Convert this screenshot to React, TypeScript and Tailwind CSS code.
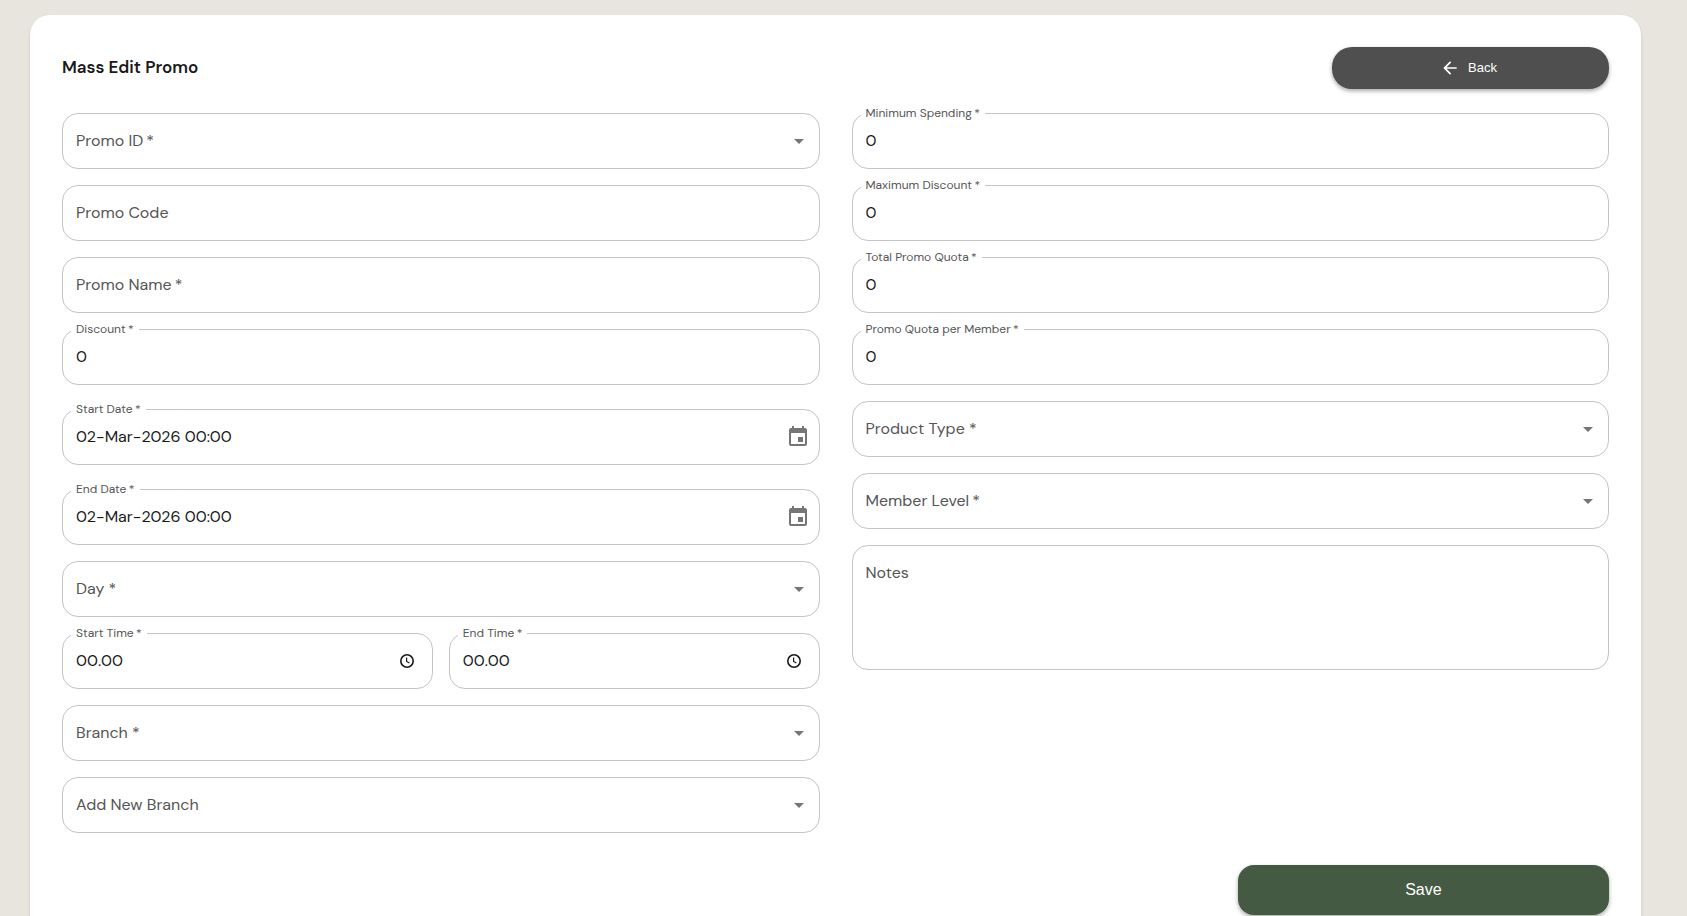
import { useState, type ReactNode } from "react"
import { MdArrowBack, MdArrowDropDown, MdEvent } from "react-icons/md"

const control =
  "block w-full h-14 rounded-2xl border border-[#c4c4c4] bg-transparent px-[13px] pb-[2px] text-base text-[#1a1a1a] outline-none focus:border-[#455a42]"

type FieldProps = {
  id: string
  label: string
  required?: boolean
  shrink?: boolean
  className?: string
  children: ReactNode
}

// Outlined field: the label sits inside, or on the border when there is a value
function Field({ id, label, required = false, shrink = false, className = "", children }: FieldProps) {
  return (
    <div className={`relative ${className}`}>
      {children}
      <label
        htmlFor={id}
        className={
          shrink
            ? "absolute -top-2 left-[9px] px-[5px] bg-white text-xs leading-4 text-[#555555]"
            : "absolute top-4 left-[14px] text-base leading-6 text-[#555555] pointer-events-none"
        }
      >
        {label}
        {required && <span>&thinsp;*</span>}
      </label>
    </div>
  )
}

type InputProps = { id: string; label: string; required?: boolean; initial?: string }

function TextField({ id, label, required, initial = "" }: InputProps) {
  const [value, setValue] = useState(initial)
  return (
    <Field id={id} label={label} required={required} shrink={value !== ""}>
      <input id={id} type="text" className={control} value={value} onChange={(e) => setValue(e.target.value)} />
    </Field>
  )
}

function SelectField({ id, label, required }: InputProps) {
  return (
    <Field id={id} label={label} required={required}>
      <select id={id} className={`${control} appearance-none`} defaultValue="">
        <option value=""></option>
      </select>
      <MdArrowDropDown className="absolute top-4 right-[9px] size-6 text-[#757575] pointer-events-none" />
    </Field>
  )
}

function DateField({ id, label }: InputProps) {
  return (
    <div className="pt-2">
      <Field id={id} label={label} required shrink>
        <input id={id} type="text" className={control} defaultValue="02-Mar-2026 00:00" />
        <button type="button" aria-label="Choose date" className="absolute top-4 right-[10px] text-[#757575]">
          <MdEvent className="size-6" />
        </button>
      </Field>
    </div>
  )
}

function TimeField({ id, label }: InputProps) {
  return (
    <Field id={id} label={label} required shrink className="flex-1">
      <input id={id} type="text" className={`${control} [font-kerning:none]`} defaultValue="00.00" />
      <button type="button" aria-label="Choose time" className="absolute top-5 right-[18px] text-[#1a1a1a]">
        <svg className="size-4" viewBox="0 0 16 16" fill="none" stroke="currentColor">
          <circle cx="8" cy="8" r="6.2" strokeWidth="1.6" />
          <path d="M7.6 4.5v3.9l2.8 1.7" strokeWidth="1.2" />
        </svg>
      </button>
    </Field>
  )
}

export default function App() {
  return (
    <div className="min-h-screen bg-[#e8e5de] pt-[15px] pr-[46px] pl-[30px] font-['DM_Sans','Inter',sans-serif]">
      <main className="rounded-[20px] bg-white p-8 shadow-[0_2px_3px_rgba(0,0,0,0.15)]">
        <header className="flex items-center justify-between">
          <h1 className="pb-[2px] text-[17px] leading-6 font-semibold text-[#1a1a1a]">Mass Edit Promo</h1>
          <button
            type="button"
            className="flex h-[42px] w-[277px] items-center justify-center gap-2 rounded-[20px] bg-[#4f4f4f] font-['Liberation_Sans',Arial,sans-serif] text-[13px] text-white shadow-[0_2px_4px_rgba(0,0,0,0.35)]"
          >
            <MdArrowBack className="-ml-1 size-5" />
            Back
          </button>
        </header>

        <form>
          <div className="mt-6 grid grid-cols-2 items-start gap-8">
            <div className="flex flex-col gap-4">
              <SelectField id="promo-id" label="Promo ID" required />
              <TextField id="promo-code" label="Promo Code" />
              <TextField id="promo-name" label="Promo Name" required />
              <TextField id="discount" label="Discount" required initial="0" />
              <DateField id="start-date" label="Start Date" />
              <DateField id="end-date" label="End Date" />
              <SelectField id="day" label="Day *" />
              <div className="flex gap-4">
                <TimeField id="start-time" label="Start Time" />
                <TimeField id="end-time" label="End Time" />
              </div>
              <SelectField id="branch" label="Branch *" />
              <SelectField id="new-branch" label="Add New Branch" />
            </div>

            <div className="flex flex-col gap-4">
              <TextField id="min-spending" label="Minimum Spending" required initial="0" />
              <TextField id="max-discount" label="Maximum Discount" required initial="0" />
              <TextField id="total-quota" label="Total Promo Quota" required initial="0" />
              <TextField id="member-quota" label="Promo Quota per Member" required initial="0" />
              <SelectField id="product-type" label="Product Type *" />
              <SelectField id="member-level" label="Member Level" required />
              <Field id="notes" label="Notes">
                <textarea
                  id="notes"
                  className="block h-[125px] w-full resize-none rounded-2xl border border-[#c4c4c4] px-[13px] py-4 text-base text-[#1a1a1a] outline-none focus:border-[#455a42]"
                />
              </Field>
            </div>
          </div>

          <div className="mt-8 flex justify-end">
            <button
              type="submit"
              className="h-[50px] w-[24%] rounded-2xl bg-[#455a42] font-['Liberation_Sans',Arial,sans-serif] text-base text-white shadow-[0_2px_4px_rgba(0,0,0,0.35)]"
            >
              Save
            </button>
          </div>
        </form>
      </main>
    </div>
  )
}
